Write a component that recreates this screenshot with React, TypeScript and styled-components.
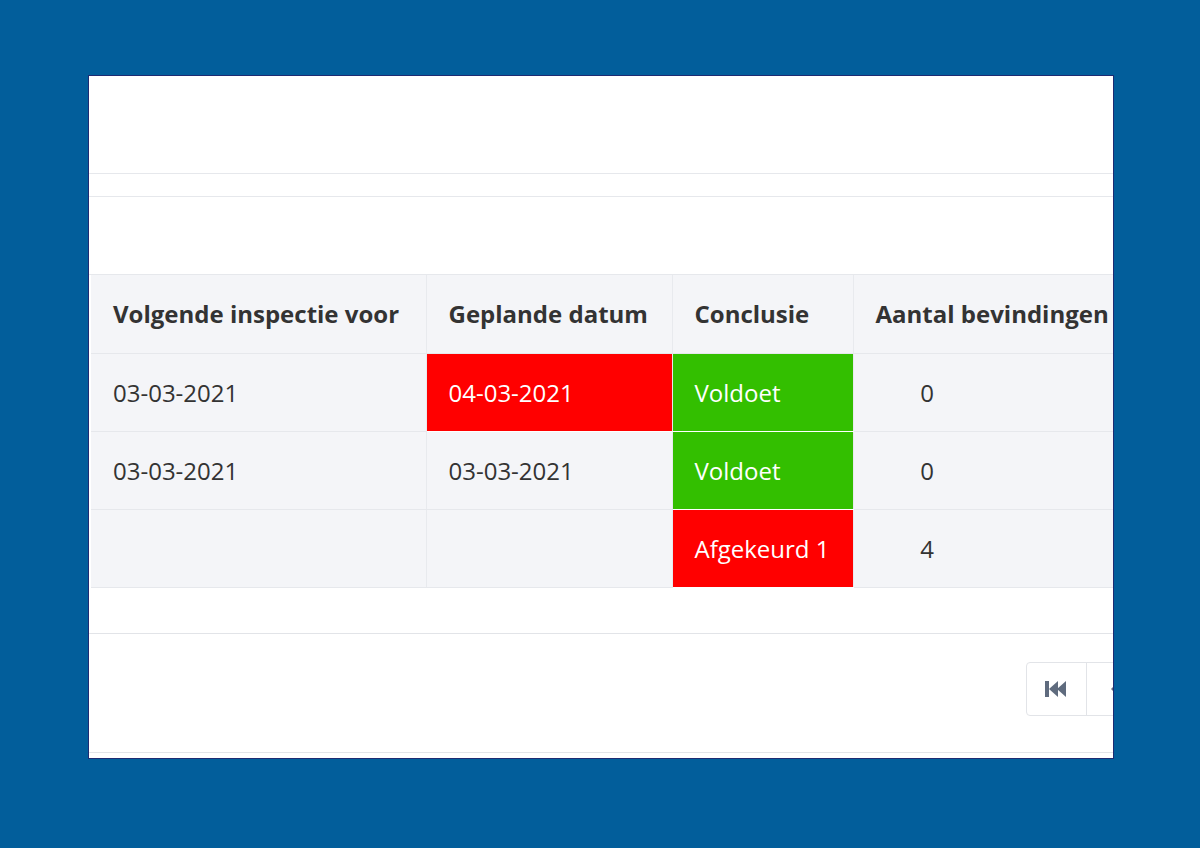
import styled, { createGlobalStyle } from 'styled-components'

const Global = createGlobalStyle`
  html, body { margin: 0; padding: 0; background: #025e9b; }
  body { font-family: "Open Sans", "Liberation Sans", sans-serif; }
`

const Page = styled.div`
  width: 1200px;
  height: 848px;
  padding: 75px 0 0 88px;
  box-sizing: border-box;
`

const Frame = styled.div`
  width: 1026px;
  height: 684px;
  box-sizing: border-box;
  border: 1px solid #1e2b72;
  background: #fff;
  overflow: hidden;
`

const Header = styled.div`
  height: 97px;
  border-bottom: 1px solid #e6e8ec;
`

const Strip = styled.div`
  height: 22px;
  border-bottom: 1px solid #e6e8ec;
`

const Spacer = styled.div`
  height: 77px;
  border-bottom: 1px solid #e6e8ec;
`

const Table = styled.table`
  margin-left: 2px;
  border-collapse: collapse;
  background: #f4f5f8;
  table-layout: fixed;
  width: 1040px;
  color: #333;
  font-size: 24px;
`

const Th = styled.th<{ $w: number }>`
  box-sizing: border-box;
  width: ${(p) => p.$w}px;
  height: 78px;
  padding: 0 0 0 22px;
  text-align: left;
  font-weight: 700;
  white-space: nowrap;
  overflow: hidden;
  border-right: 1px solid #e8eaee;
  border-bottom: 1px solid #e6e8ec;
`

const Td = styled.td<{ $tone?: 'red' | 'green'; $center?: boolean }>`
  box-sizing: border-box;
  height: 78px;
  padding: 0 ${(p) => (p.$center ? 130 : 0)}px 0 ${(p) => (p.$center ? 0 : 22)}px;
  text-align: ${(p) => (p.$center ? 'center' : 'left')};
  white-space: nowrap;
  border-right: 1px solid #e8eaee;
  border-bottom: 1px solid #e6e8ec;
  background: ${(p) =>
    p.$tone === 'red' ? '#ff0000' : p.$tone === 'green' ? '#33bf00' : 'transparent'};
  color: ${(p) => (p.$tone ? '#fff' : '#333')};
  ${(p) => (p.$tone ? 'border-bottom: 1px solid #fff;' : '')}
`

const Footer = styled.div`
  margin-top: 45px;
  border-top: 1px solid #e2e4e8;
  height: 120px;
  display: flex;
  justify-content: flex-end;
  padding-top: 28px;
  box-sizing: border-box;
  border-bottom: 1px solid #e2e4e8;
`

const Pager = styled.div`
  display: flex;
  margin-right: -34px;
  height: 52px;
  border: 1px solid #e2e4e8;
  border-radius: 4px;
`

const PageBtn = styled.div`
  width: 59px;
  display: flex;
  align-items: center;
  justify-content: center;
  border-right: 1px solid #e2e4e8;
  &:last-child { border-right: none; }
`

const rows: { a: string; b: string; bTone?: 'red'; c: string; cTone: 'red' | 'green'; d: string }[] = [
  { a: '03-03-2021', b: '04-03-2021', bTone: 'red', c: 'Voldoet', cTone: 'green', d: '0' },
  { a: '03-03-2021', b: '03-03-2021', c: 'Voldoet', cTone: 'green', d: '0' },
  { a: '', b: '', c: 'Afgekeurd 1', cTone: 'red', d: '4' },
]

export default function App() {
  return (
    <Page>
      <Global />
      <Frame>
        <Header />
        <Strip />
        <Spacer />
        <Table>
          <thead>
            <tr>
              <Th $w={335}>Volgende inspectie voor</Th>
              <Th $w={246}>Geplande datum</Th>
              <Th $w={181}>Conclusie</Th>
              <Th $w={278}>Aantal bevindingen</Th>
            </tr>
          </thead>
          <tbody>
            {rows.map((r, i) => (
              <tr key={i}>
                <Td>{r.a}</Td>
                <Td $tone={r.bTone}>{r.b}</Td>
                <Td $tone={r.cTone}>{r.c}</Td>
                <Td $center>{r.d}</Td>
              </tr>
            ))}
          </tbody>
        </Table>
        <Footer>
          <Pager>
            <PageBtn>
              <svg width="24" height="18" viewBox="0 0 24 18" fill="#5f6b7e">
                <rect x="0" y="1" width="4" height="16" />
                <path d="M4 9 L13 1 V17 Z" />
                <path d="M12 9 L21 1 V17 Z" />
              </svg>
            </PageBtn>
            <PageBtn>
              <svg width="16" height="18" viewBox="0 0 16 18" fill="#5f6b7e">
                <path d="M2 9 L10 1 V17 Z" />
              </svg>
            </PageBtn>
          </Pager>
        </Footer>
      </Frame>
    </Page>
  )
}
